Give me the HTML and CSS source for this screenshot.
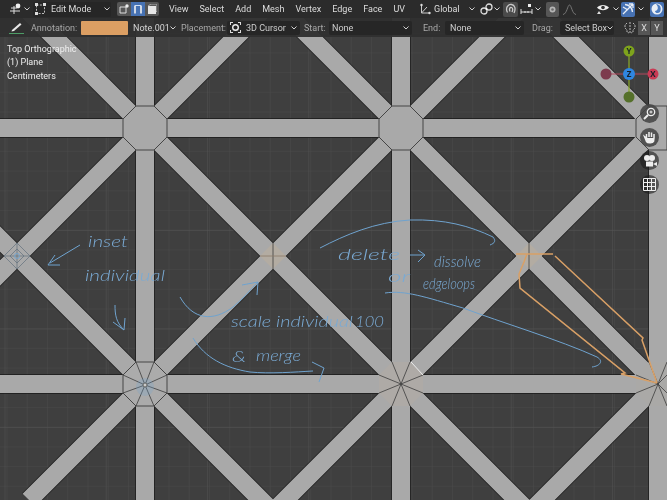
FILE: index.html
```html
<!DOCTYPE html>
<html lang="en">
<head>
<meta charset="utf-8">
<title>Blender viewport</title>
<link rel="stylesheet" href="styles.css">
</head>
<body>
<div class="viewport">
  <svg class="scene" width="667" height="500" viewBox="0 0 667 500" xmlns="http://www.w3.org/2000/svg">
    <defs>
      <pattern id="minor" patternUnits="userSpaceOnUse" x="6.5" y="13" width="20.25" height="19.7">
        <path d="M0 0V19.7M0 0H20.25" fill="none" stroke="#4a4a4a" stroke-width="1"/>
      </pattern>
      <pattern id="major" patternUnits="userSpaceOnUse" x="4.5" y="33" width="101.25" height="98.5">
        <path d="M0 0V98.5M0 0H101.25" fill="none" stroke="#535353" stroke-width="1"/>
      </pattern>
      <g id="bars">
        <path d="M145 -10V510M401 -10V510M658 -10V510M-10 128H677M-10 384H677"/>
        <path d="M-20 -37L537 520M236 -37L793 520M-20 219L281 520M492 -37L677 148"/>
        <path d="M293 -20L-20 293M549 -20L29 500M677 108L265 520M677 365L522 520"/>
      </g>
    </defs>
    <rect width="667" height="500" fill="#3f3f3f"/>
    <rect width="667" height="500" fill="url(#minor)"/>
    <rect width="667" height="500" fill="url(#major)"/>
    <use href="#bars" fill="none" stroke="#1a1a1a" stroke-width="19.4"/>
    <use href="#bars" fill="none" stroke="#a9a9a9" stroke-width="18"/>
    <g fill="#a9a9a9" stroke="#3a3a3a" stroke-width=".9">
      <polygon points="136,106 154,106 167,119 167,137 154,150 136,150 123,137 123,119"/>
      <polygon points="392,106 410,106 423,119 423,137 410,150 392,150 379,137 379,119"/>
      <polygon points="649,106 667,106 667,150 649,150 636,137 636,119"/>
      <polygon points="136,362 154,362 167,375 167,393 154,406 136,406 123,393 123,375" fill="#ababab"/>
    </g>
    <polygon points="392,362 410,362 423,375 423,393 410,406 392,406 379,393 379,375" fill="#aeaaa6"/>
    <polygon points="649,362 667,362 667,406 649,406 636,393 636,375" fill="#aaa9a7"/>
    <polygon points="273,243 286,256 273,269 260,256" fill="#b3aca2"/>
    <polygon points="529,243 542,256 529,269 516,256" fill="#b3aca2"/>
    <polygon points="17,243 30,256 17,269 4,256" fill="#aaa"/>
    <g fill="none" stroke="#3c3c3c" stroke-width=".8">
      <path d="M145 385L136 362M145 385L154 362M145 385L167 375M145 385L167 393M145 385L154 406M145 385L136 406M145 385L123 393M145 385L123 375"/>
      <path d="M401 384L392 362M401 384L410 362M401 384L423 375M401 384L423 393M401 384L410 406M401 384L392 406M401 384L379 393M401 384L379 375"/>
      <path d="M658 384L649 362M658 384L667 362M658 384L667 393M658 384L649 406M658 384L636 393M658 384L636 375M658 384L667 375M658 384L667 406"/>
      <path d="M273 242V270M529 243V269"/>
    </g>
    <path d="M260 256H286" stroke="#8a7a68" stroke-width=".8"/>
    <path d="M17 243L30 256L17 269L4 256ZM17 249L24 256L17 263L10 256ZM17 243V269M4 256H30" fill="none" stroke="#62707c" stroke-width=".7"/>
    <path d="M411 362L423 375" stroke="#eee" stroke-width="1"/>
    <circle cx="145" cy="385" r="2" fill="#e8d8c8" stroke="#4b3a2a" stroke-width=".8"/>
    <circle cx="145" cy="387" r="9" fill="#6fa3cf" opacity=".25"/>
    <circle cx="17" cy="256" r="2.500" fill="none" stroke="#6fa3cf" stroke-width=".9"/>
    <path class="edge" d="M516 254H553M555 256L643 338L642 340L657 383M527 254L524 262L519 274L520 288L625 373L621 374L657 383"/>
    <g class="ink">
      <path d="M80 245L50 263M55 255L48 265L60 265"/>
      <path d="M115 305C115 315 116 322 124 330M113 322L124 330L125 318"/>
      <path d="M180 297C193 320 213 322 233 307C242 300 250 290 258 282M242 285L258 282L257 295"/>
      <path d="M193 338C205 358 225 368 250 372C270 374 295 372 313 371M312 362L324 368L319 382"/>
      <path d="M320 248C345 235 375 222 410 220C445 219 470 226 493 237C496 241 495 243 490 245"/>
      <path d="M385 293C405 290 425 297 463 308C500 322 560 340 597 357C604 361 600 366 592 367"/>
      <path d="M410 255H424M418 250L425 255L418 262"/>
    </g>
    <g class="note">
      <text x="88" y="247" textLength="40" lengthAdjust="spacingAndGlyphs">inset</text>
      <text x="85" y="281" textLength="80" lengthAdjust="spacingAndGlyphs">individual</text>
      <text x="231" y="327" textLength="122" lengthAdjust="spacingAndGlyphs">scale individual</text>
      <text x="355" y="327" textLength="29" lengthAdjust="spacingAndGlyphs">100</text>
      <text x="232" y="362" textLength="14" lengthAdjust="spacingAndGlyphs">&amp;</text>
      <text x="256" y="361" textLength="45" lengthAdjust="spacingAndGlyphs">merge</text>
      <text x="338" y="260" textLength="62" lengthAdjust="spacingAndGlyphs">delete</text>
      <text x="434" y="267" textLength="47" lengthAdjust="spacingAndGlyphs">dissolve</text>
      <text x="388" y="282" textLength="22" lengthAdjust="spacingAndGlyphs">or</text>
      <text x="423" y="289" textLength="52" lengthAdjust="spacingAndGlyphs">edgeloops</text>
    </g>
  </svg>

  <header class="topbar">
    <div class="tool">
      <svg width="14" height="12" viewBox="0 0 14 12"><path d="M1 8H11M5 3V11M2 5H8" stroke="#ddd" fill="none"/><circle cx="9" cy="3" r="2.400" fill="#eee"/></svg>
      <svg class="chev" width="6" height="4" viewBox="0 0 6 4"><path d="M.5 .5L3 3L5.500 .5"/></svg>
    </div>
    <div class="mode">
      <svg width="11" height="12" viewBox="0 0 11 12"><path d="M1.500 2H9.500V10.500H1.500Z" fill="none" stroke="#bbb" stroke-dasharray="2 1.400"/><rect y="0" width="3" height="3" fill="#ddd"/><rect x="8" y="0" width="3" height="3" fill="#ddd"/><rect y="9" width="3" height="3" fill="#ddd"/></svg>
      <span class="modelabel">Edit Mode</span>
      <svg class="chev push" width="6" height="4" viewBox="0 0 6 4"><path d="M.5 .5L3 3L5.500 .5"/></svg>
    </div>
    <div class="selmodes">
      <span class="selbtn"><svg width="10" height="10" viewBox="0 0 10 10"><path d="M1 3H7V9H1Z" fill="none" stroke="#ddd"/><circle cx="8" cy="2" r="1.700" fill="#eee"/></svg></span>
      <span class="selbtn active"><svg width="10" height="11" viewBox="0 0 10 11"><path d="M2 1.500V9.500M8 1.500V9.500" stroke="#f2f2f2" stroke-width="1.600" fill="none"/><path d="M2 1.500H8" stroke="#cfe0f5"/></svg></span>
      <span class="selbtn"><svg width="10" height="10" viewBox="0 0 10 10"><rect x="1" y="2" width="8" height="8" fill="#e6e6e6"/><path d="M1 2L4 0H10V7L9 8" fill="none" stroke="#aaa"/></svg></span>
    </div>
    <nav class="menus">
      <span>View</span><span>Select</span><span>Add</span><span>Mesh</span><span>Vertex</span><span>Edge</span><span>Face</span><span>UV</span>
    </nav>
    <div class="rightgroup">
      <div class="orient">
        <svg width="12" height="12" viewBox="0 0 12 12"><path d="M2.500 2V10H11M2.500 10L8 4" fill="none" stroke="#ccc"/><circle cx="2.500" cy="2" r="1.200" fill="#ddd"/><circle cx="10.500" cy="10" r="1.200" fill="#ddd"/></svg>
        <span class="orientlabel">Global</span>
        <svg class="chev push" width="6" height="4" viewBox="0 0 6 4"><path d="M.5 .5L3 3L5.500 .5"/></svg>
      </div>
      <div class="pivot">
        <svg width="13" height="12" viewBox="0 0 13 12"><circle cx="4" cy="8" r="3" fill="none" stroke="#ddd" stroke-width="1.300"/><circle cx="9" cy="4" r="3" fill="none" stroke="#ddd" stroke-width="1.300"/><circle cx="6.500" cy="6" r="1" fill="#fff"/></svg>
        <svg class="chev" width="6" height="4" viewBox="0 0 6 4"><path d="M.5 .5L3 3L5.500 .5"/></svg>
      </div>
      <span class="magnet"><svg width="12" height="12" viewBox="0 0 12 12"><path d="M2.500 9.500C0 5 3 1 6.500 1.500C10 2 11 6 9 10M5 8.500C3.800 6 5 4 6.500 4.500C8 5 8 7 7 9" fill="none" stroke="#c9c9c9" stroke-width="1.300"/></svg></span>
      <div class="snap">
        <svg width="13" height="11" viewBox="0 0 13 11"><path d="M1 5V10M12 5V10M1 8H12M5 7V9M8 7V9" stroke="#ddd" fill="none"/><rect x="8" y="0" width="3" height="3" fill="#eee"/></svg>
        <svg class="chev" width="6" height="4" viewBox="0 0 6 4"><path d="M.5 .5L3 3L5.500 .5"/></svg>
      </div>
      <span class="prop"><svg width="7" height="7" viewBox="0 0 7 7"><circle cx="3.500" cy="3.500" r="3" fill="#b5b5b5"/><circle cx="3.500" cy="3.500" r="1.300" fill="#6a6a6a"/></svg></span>
      <span class="falloff"><svg width="13" height="11" viewBox="0 0 13 11"><path d="M0 10.500C4 10 4.500 1 6.500 1C8.500 1 9 10 13 10.500" fill="none" stroke="#777"/></svg></span>
      <div class="overlay">
        <svg width="14" height="12" viewBox="0 0 14 12"><path d="M1 4.500C4 1 10 1 13 4.500C10 8 4 8 1 4.500Z" fill="#eee"/><circle cx="7" cy="4.500" r="1.800" fill="#333"/><path d="M3 8L1 11H5Z" fill="#ddd"/></svg>
        <svg class="chev" width="6" height="4" viewBox="0 0 6 4"><path d="M.5 .5L3 3L5.500 .5"/></svg>
      </div>
      <span class="gizmobtn"><svg width="12" height="12" viewBox="0 0 12 12"><path d="M1 11L11 1M3 1.500C8 2 10 4 10.500 9M11 1H7M11 1V5M1 4L6 7" fill="none" stroke="#e8eef6" stroke-width="1.300"/></svg></span>
      <svg class="chev gizmochev" width="6" height="4" viewBox="0 0 6 4"><path d="M.5 .5L3 3L5.500 .5"/></svg>
      <span class="xraybtn"><svg width="12" height="12" viewBox="0 0 12 12"><circle cx="6" cy="6" r="5.500" fill="#e8eef6"/><path d="M5 1C9 1 11 5 9 9C7 11 4 10 4 8C7 8 8 4 5 1Z" fill="#4c7cc0"/></svg></span>
    </div>
  </header>

  <div class="toolsettings">
    <span class="pencil"><svg width="15" height="13" viewBox="0 0 15 13"><path d="M3 9L11 2L12.500 3.500L5 10L2.500 10.500Z" fill="#e8e8e8"/><path d="M0 12.500H15" stroke="#4d9c66"/></svg></span>
    <span class="lbl annot">Annotation:</span>
    <span class="swatch"></span>
    <span class="notesel">Note.001<svg class="chev" width="6" height="4" viewBox="0 0 6 4"><path d="M.5 .5L3 3L5.500 .5"/></svg></span>
    <span class="lbl place">Placement:</span>
    <div class="drop cursorsel">
      <svg width="11" height="11" viewBox="0 0 11 11"><path d="M0 .5H3M8 .5H11M0 10.500H3M8 10.500H11M.5 0V3M10.500 0V3M.5 8V11M10.500 8V11" stroke="#ddd"/><circle cx="5.500" cy="5.500" r="2.800" fill="none" stroke="#eee" stroke-width="1.400"/></svg>
      <span>3D Cursor</span>
      <svg class="chev push" width="6" height="4" viewBox="0 0 6 4"><path d="M.5 .5L3 3L5.500 .5"/></svg>
    </div>
    <span class="lbl start">Start:</span>
    <div class="drop startsel"><span>None</span><svg class="chev push" width="6" height="4" viewBox="0 0 6 4"><path d="M.5 .5L3 3L5.500 .5"/></svg></div>
    <span class="lbl end">End:</span>
    <div class="drop endsel"><span>None</span><svg class="chev push" width="6" height="4" viewBox="0 0 6 4"><path d="M.5 .5L3 3L5.500 .5"/></svg></div>
    <span class="lbl drag">Drag:</span>
    <div class="drop dragsel"><span>Select Box</span><svg class="chev push" width="6" height="4" viewBox="0 0 6 4"><path d="M.5 .5L3 3L5.500 .5"/></svg></div>
    <span class="mirror"><svg width="12" height="12" viewBox="0 0 12 12"><path d="M3 1L1 3V6L3 8V10L5 11M9 1L11 3V6L9 8V10L7 11M6 0V12" fill="none" stroke="#bbb" stroke-dasharray="2 1"/></svg></span>
    <span class="axis axisx">X</span>
    <span class="axis">Y</span>
  </div>

  <div class="info">
    <div>Top Orthographic</div>
    <div>(1) Plane</div>
    <div>Centimeters</div>
  </div>

  <svg class="gizmo" width="64" height="64" viewBox="0 0 64 64">
    <path d="M32 7V53" stroke="#8bab2a" stroke-width="1.200"/>
    <path d="M9 30H56" stroke="#b5485f" stroke-width="1.200"/>
    <circle cx="9" cy="30" r="5.500" fill="#7d3b4e"/>
    <circle cx="32" cy="53" r="5.500" fill="#55702a"/>
    <circle cx="56" cy="30" r="5.500" fill="#c93a54"/>
    <circle cx="32" cy="7" r="5.500" fill="#7ea31c"/>
    <circle cx="32" cy="30" r="6" fill="#2f86e0"/>
    <text class="gizlabel" x="56" y="33">X</text>
    <text class="gizlabel" x="32" y="10">Y</text>
    <text class="gizlabel" x="32" y="33">Z</text>
  </svg>

  <div class="navbtns">
    <span class="navbtn"><svg width="13" height="13" viewBox="0 0 13 13"><circle cx="8" cy="5" r="3.700" fill="none" stroke="#eee" stroke-width="1.300"/><path d="M5 8L1 12" stroke="#eee" stroke-width="2"/><path d="M6.500 5H9.500M8 3.500V6.500" stroke="#eee"/></svg></span>
    <span class="navbtn"><svg width="14" height="14" viewBox="0 0 14 14"><path d="M3.500 8V4M6 7V2M8.500 7V2.500M11 8V4M3.500 8L1.500 6.500L3.500 11.500C4.500 13 9.500 13.500 10.500 11.500L11 8" fill="#eee" stroke="#eee" stroke-width="1.500"/></svg></span>
    <span class="navbtn dark"><svg width="14" height="13" viewBox="0 0 14 13"><circle cx="4" cy="4" r="3" fill="#eee"/><circle cx="9" cy="4" r="3" fill="#eee"/><rect x="3" y="7.500" width="7" height="5" fill="#eee"/><path d="M10 10L14 8V12Z" fill="#eee"/></svg></span>
    <span class="navbtn dark"><svg width="13" height="13" viewBox="0 0 13 13"><path d="M.5 .5H12.500V12.500H.5ZM.5 4.500H12.500M.5 8.500H12.500M4.500 .5V12.500M8.500 .5V12.500" fill="none" stroke="#eee"/></svg></span>
  </div>
</div>
</body>
</html>
```
FILE: styles.css
```css
* { box-sizing: border-box; }
html, body { margin: 0; padding: 0; background: #3f3f3f; }
.viewport {
  position: relative;
  width: 667px;
  height: 500px;
  overflow: hidden;
  font-family: "Roboto", "Open Sans", sans-serif;
  font-size: 9px;
  white-space: nowrap;
  color: #dcdcdc;
  filter: blur(.3px);
}
.scene { position: absolute; left: 0; top: 0; }
.edge { fill: none; stroke: #d9a066; stroke-width: 1.5; }
.ink { fill: none; stroke: #6fa3cf; stroke-width: 1; }
.note { font-family: "Lato", sans-serif; font-weight: 300; font-style: italic; font-size: 15px; fill: #7aaad4; }
.chev { fill: none; stroke: #d0d0d0; stroke-width: 1; flex: none; }
.push { margin-left: auto; }

.topbar {
  position: relative;
  display: flex;
  align-items: center;
  height: 18px;
  background: #2b2b2b;
  padding-left: 9px;
}
.tool { display: flex; align-items: center; gap: 1px; width: 22px; }
.mode {
  display: flex; align-items: center;
  width: 78px; height: 15px; margin-left: 2px; padding: 0 1px 0 2px;
  background: #262626; border-radius: 2px;
}
.modelabel { margin-left: 5px; }
.selmodes { display: flex; margin-left: 6px; }
.selbtn {
  display: flex; align-items: center; justify-content: center;
  width: 14px; height: 14px; background: #565656;
}
.selbtn:first-child { border-radius: 2px 0 0 2px; }
.selbtn:last-child { border-radius: 0 2px 2px 0; }
.selbtn.active { background: #4772b3; }
.menus { display: flex; gap: 11px; margin-left: 10px; }
.rightgroup {
  position: absolute; right: 3px; top: 0; height: 18px;
  display: flex; align-items: center;
}
.orient { display: flex; align-items: center; width: 56px; }
.orientlabel { margin-left: 3px; }
.pivot { display: flex; align-items: center; gap: 1px; width: 20px; margin-left: 5px; }
.magnet { display: flex; align-items: center; justify-content: center; width: 15px; height: 15px; margin-left: 3px; background: #4a4a4a; border-radius: 2px; }
.snap { display: flex; align-items: center; gap: 2px; width: 21px; margin-left: 2px; }
.prop { display: flex; align-items: center; justify-content: center; width: 13px; height: 15px; margin-left: 5px; background: #565656; border-radius: 2px; }
.falloff { display: flex; align-items: center; margin-left: 4px; width: 13px; }
.overlay { display: flex; align-items: center; gap: 3px; width: 23px; margin-left: 20px; }
.gizmobtn { display: flex; align-items: center; justify-content: center; width: 14px; height: 15px; margin-left: 2px; background: #4772b3; border-radius: 2px; }
.gizmochev { margin-left: 3px; }
.xraybtn { display: flex; align-items: center; justify-content: center; width: 14px; height: 15px; margin-left: 6px; background: #4772b3; border-radius: 2px; }

.toolsettings {
  position: relative;
  display: flex;
  align-items: center;
  height: 19px;
  background: rgba(48, 48, 48, .96);
  padding-left: 9px;
}
.pencil { display: flex; width: 15px; }
.lbl { color: #a9a9a9; }
.annot { margin-left: 7px; width: 50px; }
.swatch { width: 47px; height: 14px; background: #dc9f63; border-radius: 1px; }
.notesel { display: flex; align-items: center; justify-content: space-between; width: 43px; margin-left: 5px; color: #d6d6d6; }
.place { margin-left: 5px; width: 46px; }
.drop { display: flex; align-items: center; height: 14px; background: #262626; border-radius: 2px; padding: 0 3px; color: #cfcfcf; }
.cursorsel { width: 73px; }
.cursorsel span { margin-left: 5px; }
.start { margin-left: 4px; width: 25px; }
.startsel { width: 83px; }
.end { margin-left: 11px; width: 22px; }
.endsel { width: 79px; padding-left: 5px; }
.drag { margin-left: 8px; width: 28px; }
.dragsel { width: 54px; padding-left: 5px; }
.mirror { display: flex; margin-left: 10px; }
.axis { display: flex; align-items: center; justify-content: center; width: 12px; height: 14px; background: #565656; color: #dcdcdc; }
.axisx { margin-left: 2px; margin-right: 1px; }

.info { position: absolute; left: 7px; top: 43px; line-height: 13.300px; color: #efefef; }
.gizmo { position: absolute; left: 597px; top: 44px; }
.gizlabel { font-family: "Open Sans", sans-serif; font-size: 8px; font-weight: 700; fill: #15202a; text-anchor: middle; }
.navbtns { position: absolute; left: 640px; top: 104px; display: flex; flex-direction: column; gap: 4.500px; }
.navbtn { display: flex; align-items: center; justify-content: center; width: 19px; height: 19px; border-radius: 50%; background: rgba(70, 70, 70, .88); }
.navbtn.dark { background: rgba(25, 25, 25, .6); }
```
